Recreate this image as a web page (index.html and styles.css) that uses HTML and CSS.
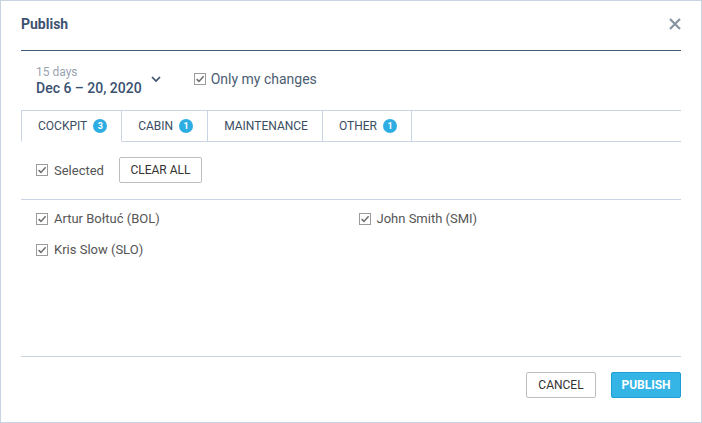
FILE: index.html
```html
<!DOCTYPE html>
<html lang="en">
<head>
<meta charset="utf-8">
<title>Publish</title>
<link rel="stylesheet" href="styles.css">
</head>
<body>
<div class="window">
  <div class="header">
    <h1 class="title">Publish</h1>
    <svg class="close" width="12" height="12" viewBox="0 0 12 12"><path d="M1 1 L11 11 M11 1 L1 11" stroke="#8794a2" stroke-width="2.2" fill="none"/></svg>
  </div>

  <div class="filters">
    <div class="range">
      <div class="range-days">15 days</div>
      <div class="range-dates">Dec 6 – 20, 2020</div>
    </div>
    <svg class="chevron" width="10" height="6" viewBox="0 0 10 6"><path d="M1 1 L5 5 L9 1" stroke="#3a5070" stroke-width="1.7" fill="none"/></svg>
    <label class="check check-own">
      <svg class="cb" width="12" height="12" viewBox="0 0 12 12"><rect x="0.5" y="0.5" width="11" height="11" fill="#fff" stroke="#9b9b9b"/><path d="M2.6 6.1 L5 8.4 L9.6 3.2" stroke="#6e6e6e" stroke-width="1.5" fill="none"/></svg>
      <span>Only my changes</span>
    </label>
  </div>

  <div class="tabs">
    <div class="tab active">COCKPIT <span class="badge">3</span></div>
    <div class="tab">CABIN <span class="badge">1</span></div>
    <div class="tab">MAINTENANCE</div>
    <div class="tab">OTHER <span class="badge">1</span></div>
    <div class="tab-fill"></div>
  </div>

  <div class="select-row">
    <label class="check">
      <svg class="cb" width="12" height="12" viewBox="0 0 12 12"><rect x="0.5" y="0.5" width="11" height="11" fill="#fff" stroke="#9b9b9b"/><path d="M2.6 6.1 L5 8.4 L9.6 3.2" stroke="#6e6e6e" stroke-width="1.5" fill="none"/></svg>
      <span>Selected</span>
    </label>
    <button class="btn btn-clear">CLEAR ALL</button>
  </div>

  <div class="people">
    <label class="check person">
      <svg class="cb" width="12" height="12" viewBox="0 0 12 12"><rect x="0.5" y="0.5" width="11" height="11" fill="#fff" stroke="#9b9b9b"/><path d="M2.6 6.1 L5 8.4 L9.6 3.2" stroke="#6e6e6e" stroke-width="1.5" fill="none"/></svg>
      <span>Artur Bołtuć (BOL)</span>
    </label>
    <label class="check person">
      <svg class="cb" width="12" height="12" viewBox="0 0 12 12"><rect x="0.5" y="0.5" width="11" height="11" fill="#fff" stroke="#9b9b9b"/><path d="M2.6 6.1 L5 8.4 L9.6 3.2" stroke="#6e6e6e" stroke-width="1.5" fill="none"/></svg>
      <span>John Smith (SMI)</span>
    </label>
    <label class="check person">
      <svg class="cb" width="12" height="12" viewBox="0 0 12 12"><rect x="0.5" y="0.5" width="11" height="11" fill="#fff" stroke="#9b9b9b"/><path d="M2.6 6.1 L5 8.4 L9.6 3.2" stroke="#6e6e6e" stroke-width="1.5" fill="none"/></svg>
      <span>Kris Slow (SLO)</span>
    </label>
  </div>

  <div class="footer">
    <button class="btn btn-cancel">CANCEL</button>
    <button class="btn btn-publish">PUBLISH</button>
  </div>
</div>
</body>
</html>
```

FILE: styles.css
```css
* { box-sizing: border-box; }

html, body {
  margin: 0;
  padding: 0;
  background: #fff;
}

body {
  font-family: Roboto, "Liberation Sans", Arial, sans-serif;
  color: #555;
}

.window {
  width: 702px;
  height: 423px;
  border: 1px solid #c8d4e1;
  padding: 0 20px;
  display: flex;
  flex-direction: column;
  background: #fff;
}

.header {
  height: 50px;
  flex: none;
  border-bottom: 1px solid #3e5a7b;
  display: flex;
  align-items: flex-start;
  justify-content: space-between;
  padding-top: 14px;
}

.title {
  margin: 0;
  font-size: 14px;
  line-height: 18px;
  font-weight: 700;
  color: #3d5270;
}

.close {
  display: block;
  margin-top: 3px;
}

.filters {
  height: 59px;
  flex: none;
  display: flex;
  align-items: flex-start;
  padding: 14px 0 0 15px;
}

.range-days {
  font-size: 12px;
  line-height: 14px;
  color: #9aa4b0;
}

.range-dates {
  font-size: 14px;
  line-height: 18px;
  font-weight: 500;
  color: #3a5070;
}

.chevron {
  display: block;
  margin: 11px 0 0 9px;
}

.check {
  display: flex;
  align-items: center;
  gap: 6px;
  font-size: 13px;
  color: #555;
  white-space: nowrap;
}

.cb {
  display: block;
  flex: none;
}

.check-own {
  margin: 6px 0 0 33px;
  gap: 5px;
  font-size: 14px;
  line-height: 16px;
  color: #4b5d73;
}

.tabs {
  height: 32px;
  flex: none;
  display: flex;
  border-top: 1px solid #c9d5e2;
}

.tab {
  height: 31px;
  display: flex;
  align-items: center;
  gap: 6px;
  padding: 0 14px 0 16px;
  font-size: 12px;
  color: #3b4d63;
  border-right: 1px solid #c9d5e2;
  border-bottom: 1px solid #c9d5e2;
  white-space: nowrap;
}

.tab:first-child {
  border-left: 1px solid #c9d5e2;
}

.tab.active {
  border-bottom-color: #fff;
}

.tab-fill {
  flex: 1;
  border-bottom: 1px solid #c9d5e2;
}

.badge {
  width: 14px;
  height: 14px;
  border-radius: 50%;
  background: #2eade3;
  color: #fff;
  font-size: 9px;
  font-weight: 700;
  display: flex;
  align-items: center;
  justify-content: center;
}

.select-row {
  height: 58px;
  flex: none;
  display: flex;
  align-items: flex-start;
  gap: 15px;
  padding: 15px 0 0 15px;
  border-bottom: 1px solid #c9d5e2;
}

.select-row .check {
  height: 26px;
}

.btn {
  height: 26px;
  font-family: inherit;
  font-size: 12px;
  border-radius: 2px;
  cursor: pointer;
  padding: 0;
  white-space: nowrap;
}

.btn-clear {
  width: 83px;
  background: #fff;
  border: 1px solid #bdbdbd;
  color: #333;
}

.people {
  flex: 1;
  display: grid;
  grid-template-columns: 1fr 1fr;
  grid-auto-rows: 31px;
  padding: 3px 0 0 15px;
  align-content: start;
}

.person {
  height: 31px;
}

.footer {
  height: 66px;
  flex: none;
  border-top: 1px solid #c9d5e2;
  display: flex;
  justify-content: flex-end;
  align-items: flex-start;
  gap: 15px;
  padding-top: 15px;
}

.btn-cancel {
  width: 70px;
  background: #fff;
  border: 1px solid #bdbdbd;
  color: #333;
}

.btn-publish {
  width: 70px;
  background: #35b5e6;
  border: 1px solid #1f9fd6;
  color: #fff;
  font-weight: 700;
}
```
